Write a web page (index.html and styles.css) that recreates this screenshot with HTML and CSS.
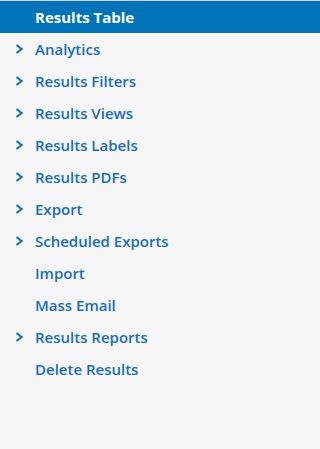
FILE: index.html
```html
<!DOCTYPE html>
<html lang="en">

<head>
    <meta charset="UTF-8">
    <meta name="viewport" content="width=device-width, initial-scale=1.0">
    <title>Results</title>
    <link rel="stylesheet" href="styles.css">
</head>

<body>
    <nav class="sidebar">
        <ul class="menu">
            <li class="item active"><span class="label">Results Table</span></li>
            <li class="item has-sub"><svg class="chev" viewBox="0 0 8 10"><polyline points="1.5,1 6.5,5 1.5,9" /></svg><span class="label">Analytics</span></li>
            <li class="item has-sub"><svg class="chev" viewBox="0 0 8 10"><polyline points="1.5,1 6.5,5 1.5,9" /></svg><span class="label">Results Filters</span></li>
            <li class="item has-sub"><svg class="chev" viewBox="0 0 8 10"><polyline points="1.5,1 6.5,5 1.5,9" /></svg><span class="label">Results Views</span></li>
            <li class="item has-sub"><svg class="chev" viewBox="0 0 8 10"><polyline points="1.5,1 6.5,5 1.5,9" /></svg><span class="label">Results Labels</span></li>
            <li class="item has-sub"><svg class="chev" viewBox="0 0 8 10"><polyline points="1.5,1 6.5,5 1.5,9" /></svg><span class="label">Results PDFs</span></li>
            <li class="item has-sub"><svg class="chev" viewBox="0 0 8 10"><polyline points="1.5,1 6.5,5 1.5,9" /></svg><span class="label">Export</span></li>
            <li class="item has-sub"><svg class="chev" viewBox="0 0 8 10"><polyline points="1.5,1 6.5,5 1.5,9" /></svg><span class="label">Scheduled Exports</span></li>
            <li class="item"><span class="label">Import</span></li>
            <li class="item"><span class="label">Mass Email</span></li>
            <li class="item has-sub"><svg class="chev" viewBox="0 0 8 10"><polyline points="1.5,1 6.5,5 1.5,9" /></svg><span class="label">Results Reports</span></li>
            <li class="item"><span class="label">Delete Results</span></li>
        </ul>
    </nav>
</body>

</html>
```

FILE: styles.css
```css
* {
    margin: 0;
    padding: 0;
    box-sizing: border-box;
}

html,
body {
    height: 100%;
}

body {
    background: #f6f6f6;
    font-family: "Open Sans", "Liberation Sans", sans-serif;
}

.sidebar {
    border-top: 1px solid #d4d4d4;
    min-height: 100%;
}

.menu {
    list-style: none;
}

.item {
    height: 32px;
    display: flex;
    align-items: center;
    padding-left: 35px;
    font-size: 15px;
    font-weight: 600;
    color: #1c6db4;
}

.item.has-sub {
    padding-left: 15px;
}

.item.active {
    background: #0073b9;
    color: #fff;
    font-weight: 700;
}

.chev {
    width: 8px;
    height: 10px;
    margin-right: 12px;
    flex-shrink: 0;
}

.chev polyline {
    fill: none;
    stroke: #1c6db4;
    stroke-width: 2.2;
}
```
